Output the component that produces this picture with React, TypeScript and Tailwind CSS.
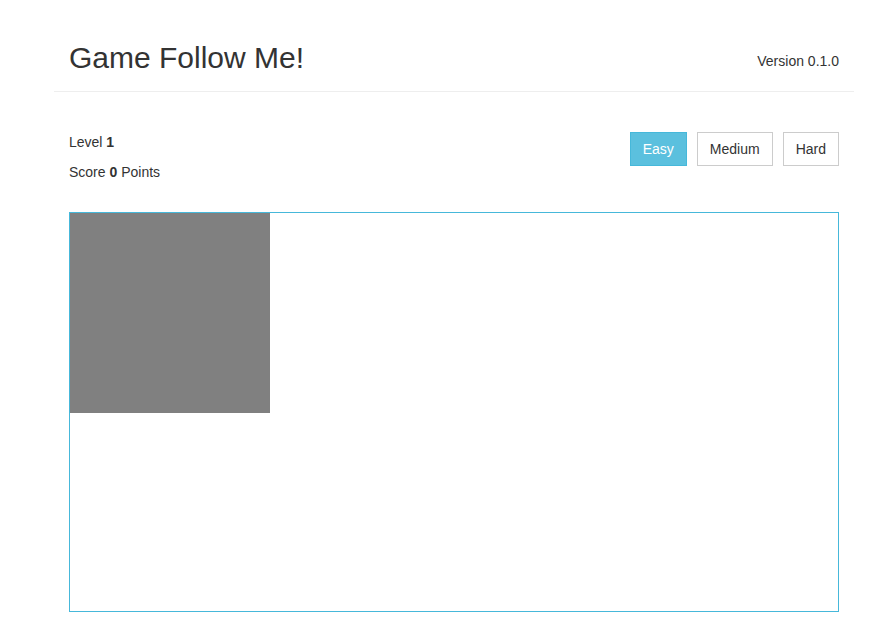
export default function App() {
  const font = { fontFamily: '"Liberation Sans", Arial, sans-serif' };
  return (
    <div className="min-h-[636px] bg-white text-[#333] text-[14px] leading-[1.43]" style={font}>
      <div className="ml-[54px] w-[800px]">
        <div className="flex items-end justify-between px-[15px] pt-[41px] pb-[17px] border-b border-[#eee]">
          <h1 className="text-[30px] leading-[1.1] font-normal text-[#333]">Game Follow Me!</h1>
          <div className="mb-[3px]">Version 0.1.0</div>
        </div>
        <div className="px-[15px] pt-[40px]">
          <div className="flex justify-between items-start">
            <div>
              <p className="mt-[0px]">Level <b>1</b></p>
              <p className="mt-[10px]">Score <b>0</b> Points</p>
            </div>
            <div className="flex gap-[10px]">
              <button className="h-[34px] px-[12px] border border-[#46b8da] bg-[#5bc0de] text-white">Easy</button>
              <button className="h-[34px] px-[12px] border border-[#ccc] bg-white text-[#333]">Medium</button>
              <button className="h-[34px] px-[12px] border border-[#ccc] bg-white text-[#333]">Hard</button>
            </div>
          </div>
          <div className="mt-[30px] w-[770px] h-[400px] border border-[#46b8da]">
            <div className="w-[200px] h-[200px] bg-[#808080]" />
          </div>
        </div>
      </div>
    </div>
  );
}
